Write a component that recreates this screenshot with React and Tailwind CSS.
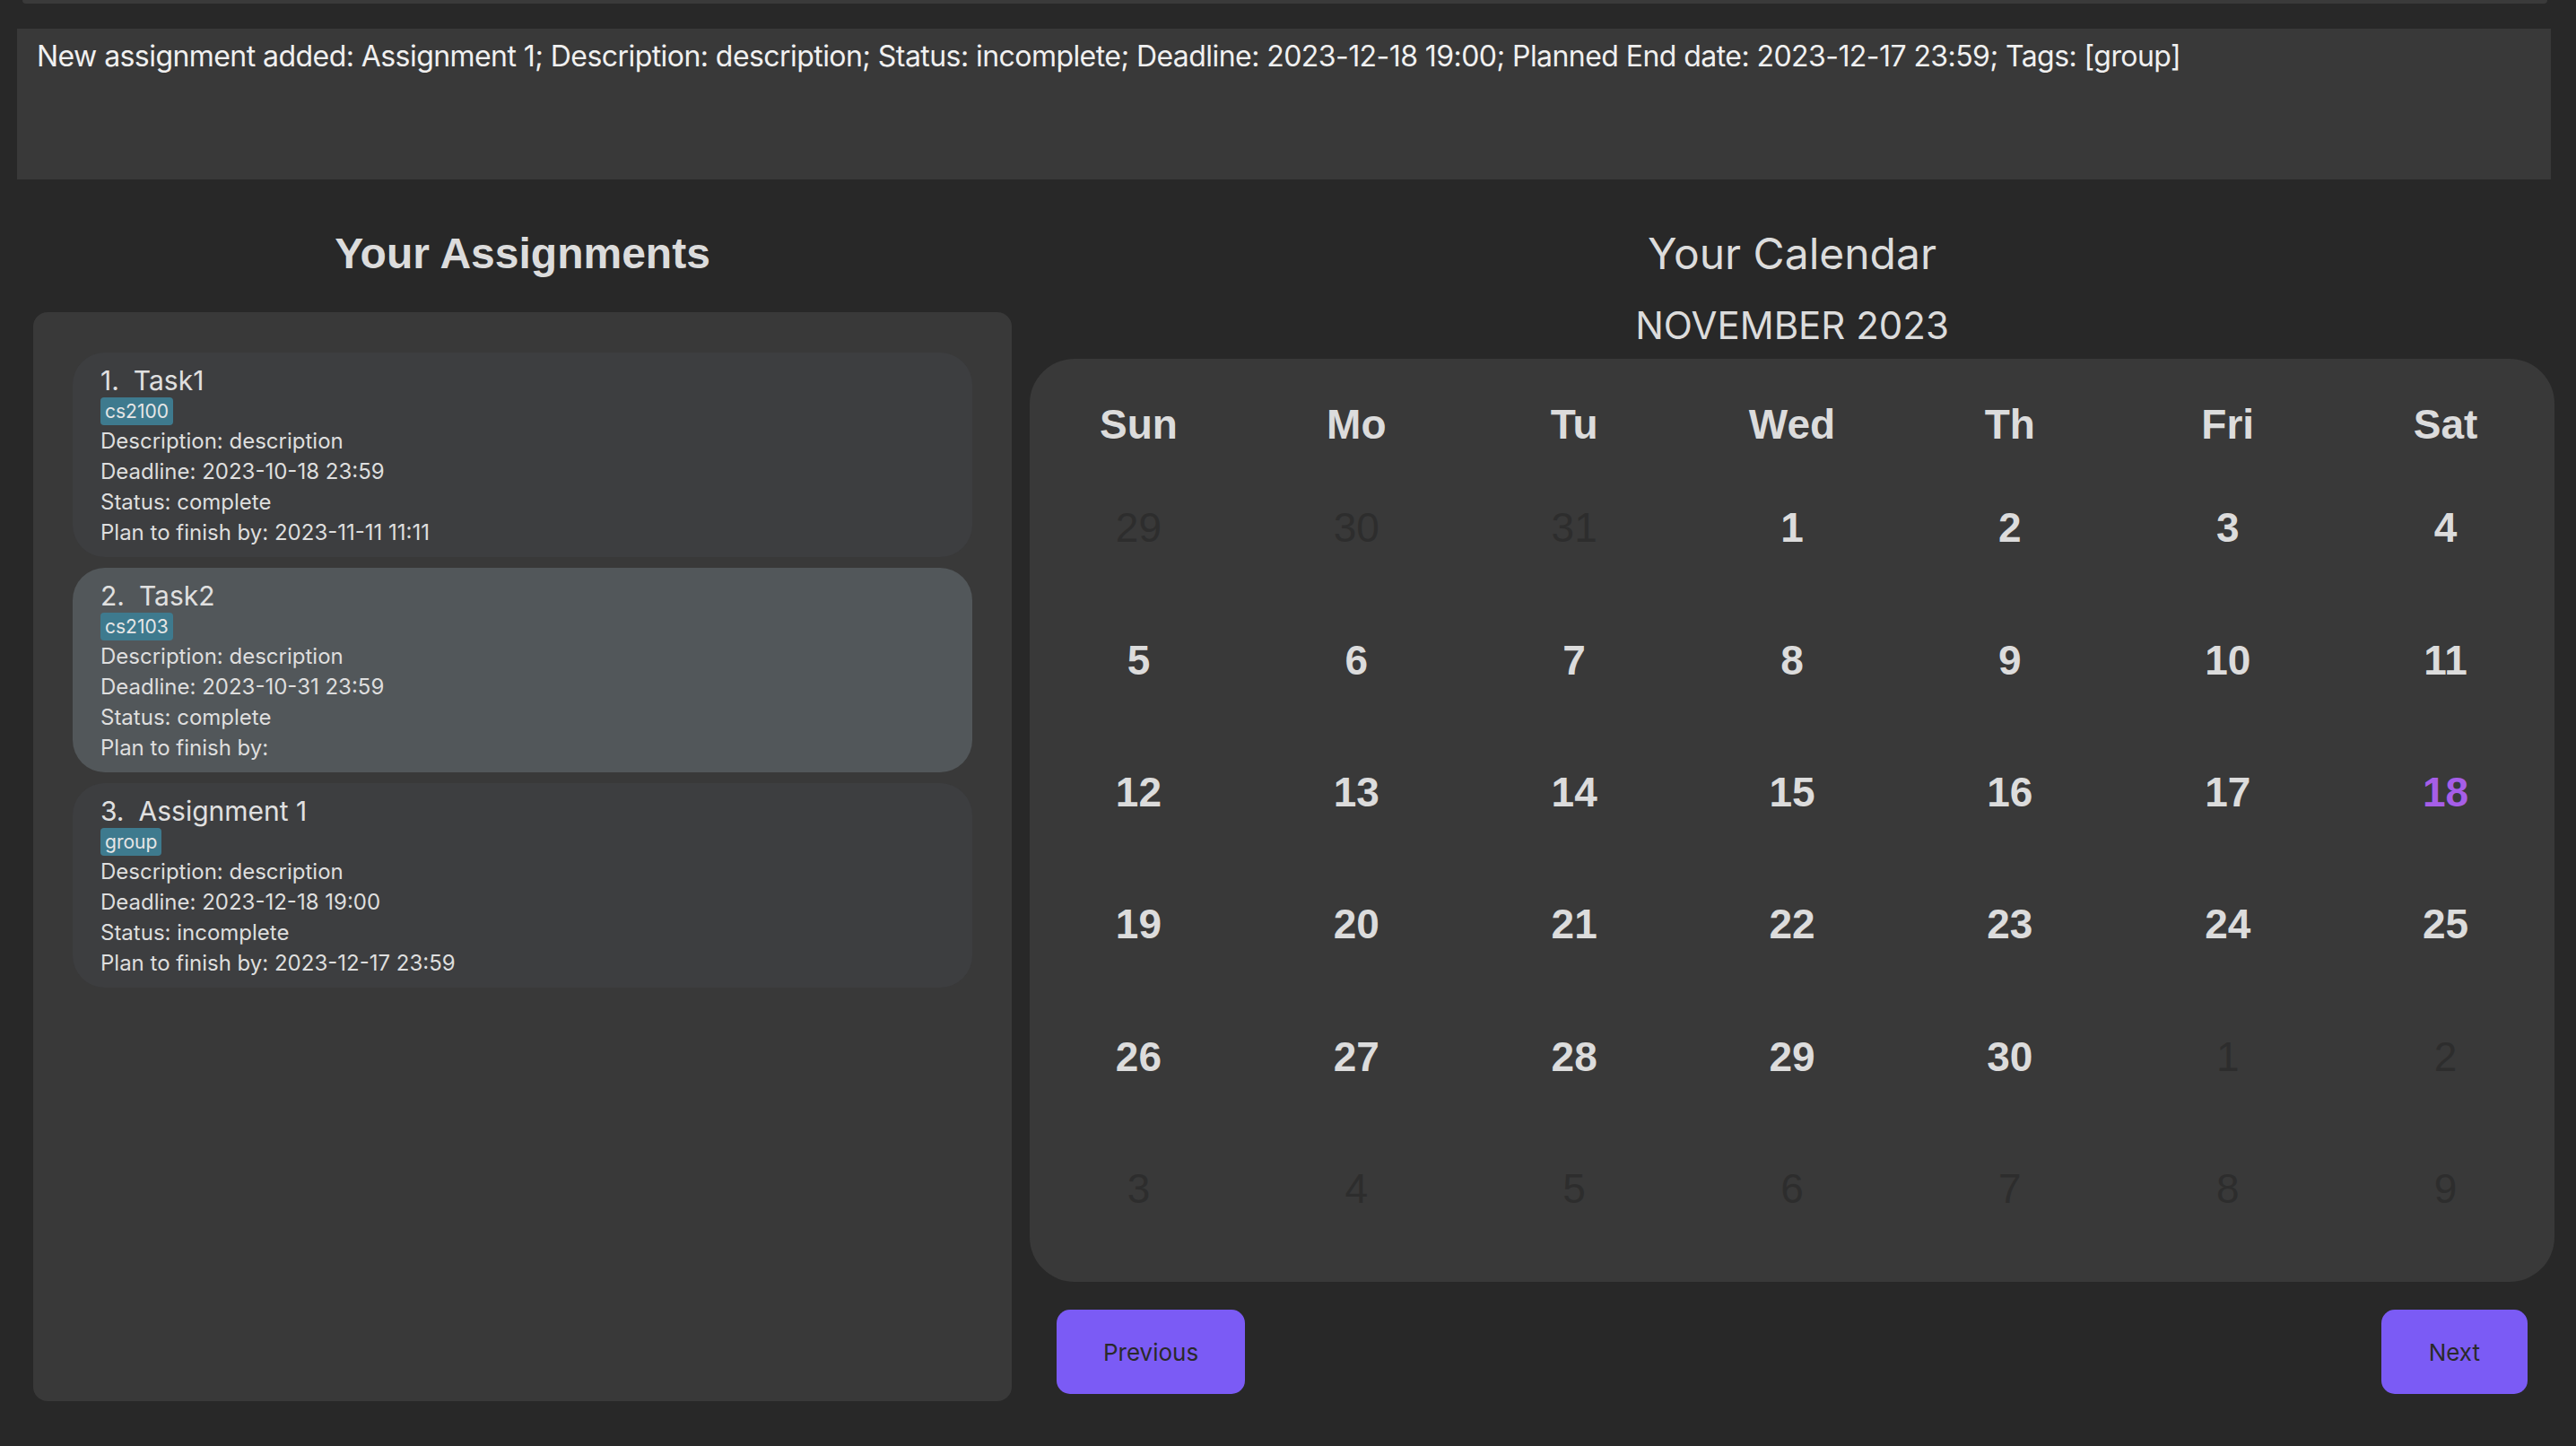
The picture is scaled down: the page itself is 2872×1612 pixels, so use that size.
import React from 'react';

const assignments = [
    {
        name: 'Task1',
        tag: 'cs2100',
        description: 'description',
        deadline: '2023-10-18 23:59',
        status: 'complete',
        plan: '2023-11-11 11:11',
    },
    {
        name: 'Task2',
        tag: 'cs2103',
        description: 'description',
        deadline: '2023-10-31 23:59',
        status: 'complete',
        plan: '',
        selected: true,
    },
    {
        name: 'Assignment 1',
        tag: 'group',
        description: 'description',
        deadline: '2023-12-18 19:00',
        status: 'incomplete',
        plan: '2023-12-17 23:59',
    },
];

const days = ['Sun', 'Mo', 'Tu', 'Wed', 'Th', 'Fri', 'Sat'];

// each cell: [day, inMonth]
const weeks = [
    [[29, false], [30, false], [31, false], [1, true], [2, true], [3, true], [4, true]],
    [[5, true], [6, true], [7, true], [8, true], [9, true], [10, true], [11, true]],
    [[12, true], [13, true], [14, true], [15, true], [16, true], [17, true], [18, true]],
    [[19, true], [20, true], [21, true], [22, true], [23, true], [24, true], [25, true]],
    [[26, true], [27, true], [28, true], [29, true], [30, true], [1, false], [2, false]],
    [[3, false], [4, false], [5, false], [6, false], [7, false], [8, false], [9, false]],
];

const AssignmentCard = ({ index, item }) => (
    <div
        className={`rounded-[36px] pl-[31px] pr-6 pt-[13px] pb-[10px] h-[228px] ${
            item.selected ? 'bg-[#52575a]' : 'bg-[#3d3e40]'
        }`}
    >
        <div className="flex gap-[16px] text-[30px] leading-[36px] text-[#e0e0e0]">
            <span>{index}.</span>
            <span>{item.name}</span>
        </div>
        <div className="flex">
            <span className="mt-px bg-[#3e7a8e] text-[#e6e6e6] text-[21px] leading-[31px] px-[5px] rounded-[4px]">
                {item.tag}
            </span>
        </div>
        <div className="mt-px text-[24px] leading-[34px] text-[#dedede]">
            <div>Description: {item.description}</div>
            <div>Deadline: {item.deadline}</div>
            <div>Status: {item.status}</div>
            <div>Plan to finish by: {item.plan}</div>
        </div>
    </div>
);

const App = () => {
    return (
        <div className="min-h-screen bg-[#282828] font-['Inter',sans-serif] overflow-hidden">
            {/* bottom edge of the command box above */}
            <div className="ml-[25px] w-[2815px] h-[4px] bg-[#3a3a3a] rounded-b-[8px]"></div>

            <div className="mt-[28px] ml-[19px] w-[2825px] h-[168px] bg-[#393939] pl-[22px] pt-[11px]">
                <p className="text-[32px] leading-[40px] tracking-[-0.56px] text-[#f0f0f0]">
                    New assignment added: Assignment 1; Description: description; Status: incomplete; Deadline: 2023-12-18 19:00; Planned End date: 2023-12-17 23:59; Tags: [group]
                </p>
            </div>

            <div className="flex mt-[53px]">
                {/* assignments */}
                <div className="ml-[37px] w-[1091px] flex flex-col">
                    <h2 className="text-center font-['Liberation_Sans',sans-serif] font-bold text-[48px] leading-[60px] text-[#dcdcdc]">
                        Your Assignments
                    </h2>
                    <div className="mt-[35px] h-[1214px] bg-[#393939] rounded-[16px] pt-[45px] px-[44px] flex flex-col gap-[12px]">
                        {assignments.map((a, i) => (
                            <AssignmentCard key={i} index={i + 1} item={a} />
                        ))}
                    </div>
                </div>

                {/* calendar */}
                <div className="ml-[20px] w-[1700px] flex flex-col">
                    <h2 className="text-center text-[48px] leading-[60px] text-[#dcdcdc]">Your Calendar</h2>
                    <div className="mt-[25px] text-center text-[42px] leading-[50px] text-[#dcdcdc]">NOVEMBER 2023</div>
                    <div className="mt-[12px] h-[1029px] bg-[#393939] rounded-[50px] pt-[39px] font-['Liberation_Sans',sans-serif] text-[46px]">
                        <div className="grid grid-cols-7 h-[60px] items-center text-center font-bold text-[#dcdcdc]">
                            {days.map((d) => (
                                <div key={d}>{d}</div>
                            ))}
                        </div>
                        <div className="mt-[16px]">
                            {weeks.map((week, w) => (
                                <div key={w} className="grid grid-cols-7 h-[147.4px] items-center text-center">
                                    {week.map(([n, inMonth], j) => (
                                        <div
                                            key={j}
                                            className={
                                                !inMonth
                                                    ? 'text-[#2d2d2d]'
                                                    : n === 18
                                                    ? 'font-bold text-[#a65ee8]'
                                                    : 'font-bold text-[#dcdcdc]'
                                            }
                                        >
                                            {n}
                                        </div>
                                    ))}
                                </div>
                            ))}
                        </div>
                    </div>
                    <div className="mt-[31px] flex justify-between px-[30px]">
                        <button className="h-[94px] px-[52px] bg-[#7b5bf5] rounded-[15px] text-[26px] text-[#2a2a2a]">
                            Previous
                        </button>
                        <button className="h-[94px] px-[53px] bg-[#7b5bf5] rounded-[15px] text-[26px] text-[#2a2a2a]">
                            Next
                        </button>
                    </div>
                </div>
            </div>
        </div>
    );
};

export default App;
